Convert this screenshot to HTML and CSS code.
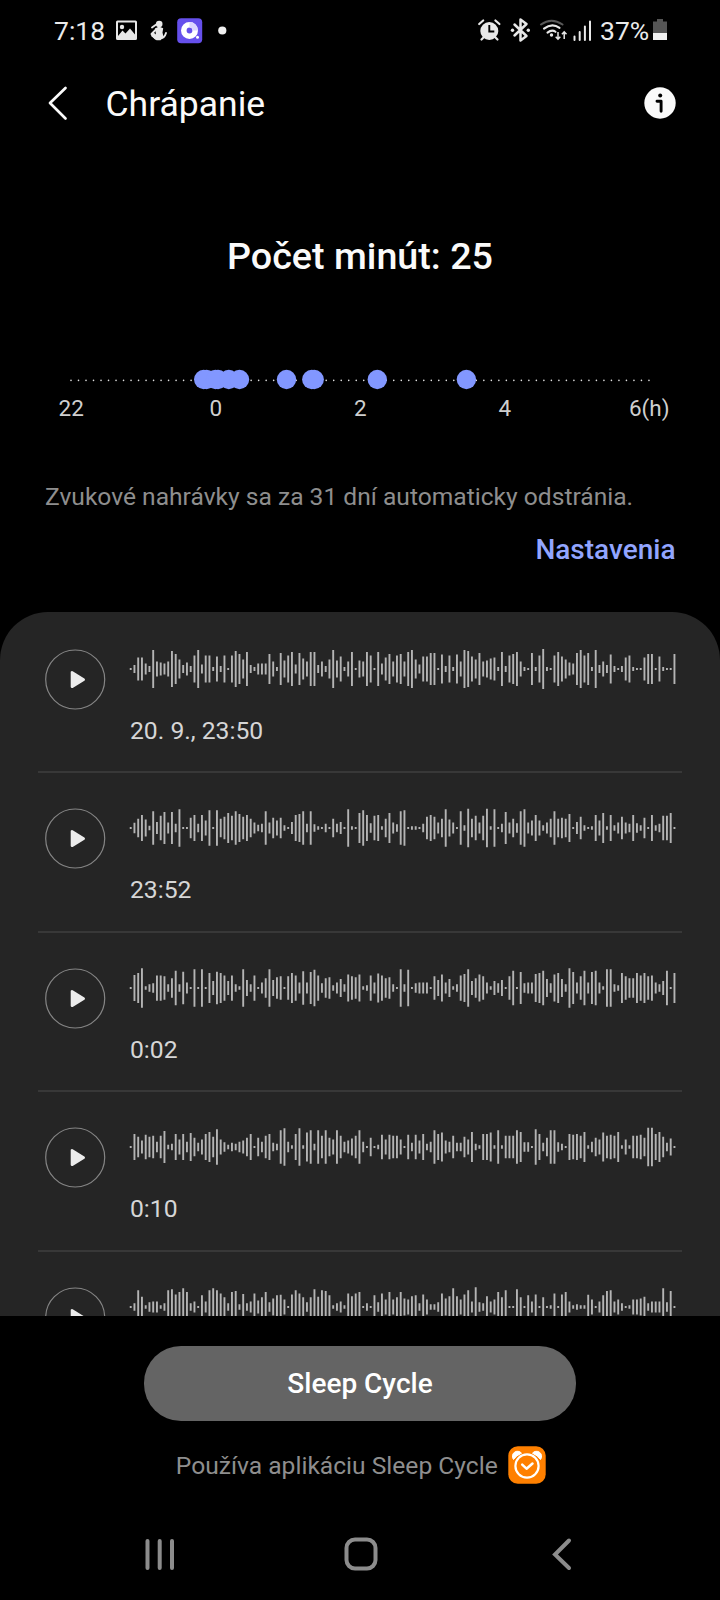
FILE: index.html
```html
<!DOCTYPE html>
<html lang="sk">
<head>
<meta charset="utf-8">
<title>Chrápanie</title>
<link rel="stylesheet" href="styles.css">
</head>
<body>
<div class="screen">
  <div class="status">
    <span class="clock">7:18</span>
    <svg class="status-left" width="120" height="30" viewBox="112 16 120 30">
      <path fill="#e8e8e8" fill-rule="evenodd" d="M117.500 20.500h18q1.500 0 1.500 1.500v16.500q0 1.500-1.500 1.500h-18q-1.500 0-1.500-1.500V22q0-1.500 1.500-1.500zM118 22.500V36l4.500-5.500 3 3 4.500-5 5 6V22.500z"/>
      <circle cx="122" cy="27" r="2.200" fill="#e8e8e8"/>
      <g fill="#e8e8e8"><circle cx="159.200" cy="24" r="3.300"/><path d="M155 28.500l4-2 4.200 1.800-.7 4.200 1 4.500-3 3.200h-4l-5.500-4.200 2.500-3.500 2.500 2z"/></g>
      <path d="M152 27.500l5-3.500M156.500 29l-5 5 4 4.500h4q5 0 6.500-5.500" fill="none" stroke="#e8e8e8" stroke-width="1.900" stroke-linecap="round" stroke-linejoin="round"/>
      <rect x="177.200" y="18.200" width="25" height="25" rx="4" fill="#6650ec"/>
      <circle cx="189.500" cy="30.500" r="5.700" fill="none" stroke="#fff" stroke-width="5.600"/>
      <path d="M189.500 22a8.500 8.500 0 0 1 8.500 8.500h-5.500a3 3 0 0 0-3-3z" fill="#dcd6ff"/>
      <circle cx="197.500" cy="37.300" r="1.500" fill="#fff"/>
      <circle cx="222.300" cy="30.500" r="4.100" fill="#f0f0f0"/>
    </svg>
    <svg class="status-right" width="118" height="30" viewBox="476 16 118 30">
      <circle cx="488.300" cy="31" r="9" fill="#e8e8e8"/>
      <path d="M488.300 25v6.500h5" fill="none" stroke="#000" stroke-width="1.900"/>
      <path d="M478.200 24l4-3.500M498.400 24l-4-3.500M482.500 37.500l-2 2M494.500 37.500l2 2" stroke="#e8e8e8" stroke-width="2.200" stroke-linecap="round"/>
      <path d="M513.500 24.500l12 11.500-6 4.500v-21l6 4.500-12 11.500" fill="none" stroke="#e8e8e8" stroke-width="2.500" stroke-linejoin="round" stroke-linecap="round"/>
      <circle cx="511.500" cy="30.200" r="1.700" fill="#e8e8e8"/><circle cx="527.300" cy="30.200" r="1.700" fill="#e8e8e8"/>
      <path d="M540 24.500q10.500-7.500 21.500 0" fill="none" stroke="#595959" stroke-width="2.100" stroke-linecap="round"/>
      <path d="M543 28.700q8-6.200 15.500-.8M546.500 32.600q4.500-3.600 8-.8" fill="none" stroke="#e8e8e8" stroke-width="2.100" stroke-linecap="round"/>
      <circle cx="550.500" cy="35" r="1.700" fill="#e8e8e8"/>
      <path d="M557 32v7M554.700 36.700l2.300 2.500 2.300-2.500M563.200 39v-7M560.900 34.300l2.300-2.500 2.300 2.500" fill="none" stroke="#e8e8e8" stroke-width="1.500"/>
      <path d="M573.500 36.500v3.500M578.700 32v8M583.900 26.500V40M589 21.500V40" stroke="#e8e8e8" stroke-width="2" stroke-linecap="round"/>
    </svg>
    <span class="percent">37%</span>
    <svg class="battery" width="14" height="22" viewBox="0 0 14 22"><path d="M4 0h6v2.500h4V14H0V2.500h4z" fill="#555"/><path d="M0 14h14v7H0z" fill="#f0f0f0"/></svg>
  </div>

  <header class="appbar">
    <svg class="back" width="20" height="36" viewBox="0 0 20 36"><path d="M17.500 3L2 18l15.500 15.500" fill="none" stroke="#fafafa" stroke-width="2.700" stroke-linecap="round" stroke-linejoin="round"/></svg>
    <h1 class="title">Chrápanie</h1>
    <svg class="info" width="32" height="32" viewBox="0 0 32 32"><circle cx="16" cy="16" r="15.700" fill="#fafafa"/><circle cx="16.200" cy="8.500" r="2" fill="#000"/><path d="M13 14.200h4.100v10" fill="none" stroke="#000" stroke-width="2.900" stroke-linecap="round" stroke-linejoin="round"/></svg>
  </header>

  <h2 class="summary">Počet minút: 25</h2>

  <svg class="timeline" width="720" height="22" viewBox="0 369 720 22">
    <path d="M71 380.400H650" stroke="#e0e0e0" stroke-width="1.600" stroke-linecap="round" stroke-dasharray="0 7.506"/>
    <g fill="#8297ff"><circle cx="203.700" cy="379.500" r="9.700"/><circle cx="206.500" cy="379.500" r="9.700"/><circle cx="215.500" cy="379.500" r="9.700"/><circle cx="218" cy="379.500" r="9.700"/><circle cx="228.800" cy="379.500" r="9.700"/><circle cx="239.500" cy="379.500" r="9.700"/><circle cx="286.500" cy="379.500" r="9.700"/><circle cx="311.800" cy="379.500" r="9.700"/><circle cx="314.200" cy="379.500" r="9.700"/><circle cx="377.300" cy="379.500" r="9.700"/><circle cx="466.400" cy="379.500" r="9.700"/></g>
  </svg>
  <div class="hours"><span>22</span><span>0</span><span>2</span><span>4</span><span>6(h)</span></div>

  <p class="note">Zvukové nahrávky sa za 31 dní automaticky odstránia.</p>
  <a class="settings">Nastavenia</a>

  <main class="recordings" id="recordings"></main>

  <footer class="footer">
    <button class="launch">Sleep Cycle</button>
    <div class="credit">
      <span>Používa aplikáciu Sleep Cycle</span>
      <svg width="38" height="38" viewBox="0 0 38 38"><rect x=".3" y=".3" width="37.400" height="37.400" rx="9.500" fill="#ff8000"/><path d="M5.500 13.500a5 5 0 0 1 8-6.300q-5 2-8 6.300zM32.500 13.500a5 5 0 0 0-8-6.300q5 2 8 6.300z" fill="#fff" stroke="#fff" stroke-linejoin="round"/><circle cx="19" cy="20" r="11.600" fill="none" stroke="#fff" stroke-width="2.200"/><path d="M14.200 18.700l4.300 4 6-5.200" fill="none" stroke="#fff" stroke-width="2.500" stroke-linecap="round" stroke-linejoin="round"/></svg>
    </div>
  </footer>

  <nav class="nav">
    <svg width="32" height="34" viewBox="0 0 32 34"><path d="M3.500 4v27M15.700 4v27M28 4v27" stroke="#8c8c8c" stroke-width="4" stroke-linecap="round"/></svg>
    <svg class="home" width="34" height="34" viewBox="0 0 34 34"><rect x="2.500" y="2.500" width="29" height="29" rx="8.500" fill="none" stroke="#8c8c8c" stroke-width="4"/></svg>
    <svg width="20" height="34" viewBox="0 0 20 34"><path d="M17 3.500L3 17.500 17 31" fill="none" stroke="#8c8c8c" stroke-width="4" stroke-linecap="round"/></svg>
  </nav>
</div>
<script src="recordings.js"></script>
</body>
</html>
```
FILE: styles.css
```css
* { box-sizing: border-box; }
body { margin: 0; background: #000; }
svg { display: block; flex: none; }

.screen {
  width: 720px;
  height: 1600px;
  display: flex;
  flex-direction: column;
  overflow: hidden;
  background: #000;
  color: #fafafa;
  font-family: Roboto, "Noto Sans", sans-serif;
}
.screen > * { flex: none; }

.status {
  height: 60px;
  display: flex;
  align-items: center;
  padding: 2px 53px 0 54px;
  font-size: 26.500px;
  color: #ebebeb;
}
.clock { width: 58px; margin-top: -1px; white-space: nowrap; }
.status-left { margin-right: auto; }
.percent { width: 49px; margin: -1px 0 0 5px; white-space: nowrap; }
.battery { margin: -2px 0 0 4px; }

.appbar {
  height: 87px;
  display: flex;
  align-items: center;
  padding: 0 44px 0 48px;
}
.back, .info { margin-top: -2px; }
.title {
  margin: 1px auto 0 37.500px;
  font-size: 35.500px;
  font-weight: 400;
}

.summary {
  margin: 83.500px 0 0;
  font-size: 37.700px;
  font-weight: 500;
  line-height: 50px;
  text-align: center;
}

.timeline { margin-top: 88.500px; }
.hours {
  display: grid;
  grid-template-columns: repeat(5, 144.500px);
  margin: 2px 0 0 -1px;
  font-size: 22.500px;
  line-height: 30px;
  text-align: center;
  color: #cfcfcf;
}

.note {
  margin: 59px 0 0 45px;
  font-size: 24.600px;
  line-height: 30px;
  color: #8e8e8e;
  white-space: nowrap;
}
.settings {
  margin: 21px 44.500px 0 0;
  font-size: 28px;
  font-weight: 500;
  line-height: 34px;
  text-align: right;
  color: #92a5ff;
}

.recordings {
  height: 704px;
  margin-top: 45px;
  padding: 2px 38px 0;
  border-radius: 48px 48px 0 0;
  overflow: hidden;
  background: #252525;
}
.recording {
  height: 159.400px;
  display: flex;
  gap: 24px;
  padding: 35px 7px 0;
  border-bottom: 2px solid #383838;
}
.details { display: flex; flex-direction: column; }
.wave { margin: -2px 0 0 -1px; }
.time {
  margin-top: 25px;
  font-size: 24.700px;
  line-height: 30px;
  color: #d6d6d6;
}

.footer {
  height: 190px;
  display: flex;
  flex-direction: column;
  align-items: center;
  padding-top: 30px;
}
.launch {
  width: 432px;
  height: 75px;
  padding: 0;
  border: 0;
  border-radius: 37px;
  background: #646464;
  color: #fff;
  font: 500 28px Roboto, "Noto Sans", sans-serif;
}
.credit {
  display: flex;
  align-items: center;
  gap: 10px;
  margin: 25px 0 0 1.500px;
  font-size: 24.600px;
  color: #8e8e8e;
}

.nav {
  height: 93px;
  display: flex;
  justify-content: space-between;
  align-items: center;
  padding: 2px 148px 0 144px;
}
.home { margin-right: 7px; }
```
FILE: recordings.js
```js
// Bar heights of each recording's waveform, with the gain applied to them.
const recordings = [
  { time: '20. 9., 23:50', gain: 1, bars: [2,8,23,23,11,6,38,15,13,11,15,36,30,19,8,13,6,27,38,9,27,27,4,25,6,27,2,27,36,30,19,34,8,4,11,11,11,30,15,4,32,17,27,34,9,32,21,15,34,34,8,15,6,19,38,17,25,4,15,34,2,17,15,34,27,2,34,11,23,30,15,27,30,15,34,38,19,9,25,25,32,32,2,29,6,27,4,29,15,38,36,25,19,32,15,17,21,23,4,34,6,27,30,34,15,4,2,32,4,27,40,4,2,27,34,25,19,13,11,32,38,27,32,4,38,8,15,8,29,6,2,6,23,27,4,2,2,23,30,30,2,25,4,2,2,30] },
  { time: '23:52', gain: 0.935, bars: [2,11,20,28,18,5,36,13,26,34,12,34,9,40,2,2,22,28,9,28,16,38,2,38,20,24,32,26,36,30,24,28,20,12,7,9,36,12,22,16,22,6,2,13,28,30,36,9,36,8,4,2,9,2,20,9,13,2,40,4,2,32,38,28,10,26,28,4,20,32,12,8,36,38,2,4,4,2,9,24,28,24,12,20,40,18,12,2,36,6,41,20,26,12,26,41,4,40,2,9,34,12,20,10,36,40,12,16,28,16,6,12,20,36,20,22,20,30,2,13,24,6,2,4,28,16,32,4,28,6,12,24,12,9,28,10,6,22,2,28,6,9,26,26,32,2] },
  { time: '0:02', gain: 0.935, bars: [2,28,32,42,4,8,10,27,27,25,8,21,37,8,35,12,2,40,2,40,2,32,15,35,32,27,15,27,8,4,40,17,8,27,2,12,21,40,17,23,25,2,25,32,27,12,36,12,34,39,27,10,21,23,6,12,19,8,29,25,23,29,4,6,27,12,31,27,21,23,8,2,40,8,39,2,10,12,12,12,2,25,17,29,12,19,4,8,27,30,40,15,21,29,25,12,4,15,10,17,2,25,37,2,34,10,12,12,30,32,37,19,10,29,32,19,8,42,34,12,25,37,12,34,37,12,4,40,40,8,6,32,25,21,21,32,27,32,25,27,12,8,15,37,2,32] },
  { time: '0:10', gain: 0.935, bars: [2,28,22,14,26,22,24,11,24,34,5,7,28,16,28,11,30,20,9,16,28,32,22,38,16,10,5,9,7,11,14,20,28,2,20,11,24,28,9,7,36,40,11,4,28,40,4,31,36,7,36,24,36,20,16,36,24,11,14,18,24,36,11,2,20,2,5,26,16,26,24,24,16,2,26,9,26,14,28,7,11,36,28,31,14,11,24,9,9,22,16,32,7,4,28,28,31,4,36,4,24,24,24,36,32,10,10,2,38,28,9,20,36,36,10,7,2,28,26,28,24,32,4,11,20,16,31,24,26,24,32,4,16,4,24,24,26,20,41,41,28,32,22,9,18,2] },
  { gain: 0.935, bars: [2,8,36,22,4,10,12,12,4,8,36,38,27,32,40,32,8,12,2,25,12,36,40,36,29,21,8,32,34,6,28,8,12,29,14,21,32,10,18,25,26,16,2,27,36,29,21,10,21,38,22,36,34,25,4,8,12,4,29,23,29,32,2,8,2,25,10,29,16,32,16,21,32,18,16,23,25,8,27,16,6,6,10,29,18,23,40,23,16,27,36,12,42,10,8,23,12,16,32,21,36,2,2,38,21,2,25,12,27,2,21,2,4,29,2,27,32,12,4,6,4,4,26,16,2,12,25,34,36,12,16,8,2,4,16,16,18,22,8,12,12,12,40,10,34,2] }
];

const PITCH = 3.75;
const MID = 22;

function wave({ bars, gain }) {
  const d = bars.map((h, i) => {
    const size = Math.max(1.8, h * gain);
    return `M${(1.7 + i * PITCH).toFixed(2)} ${(MID - size / 2).toFixed(2)}v${size.toFixed(2)}`;
  }).join('');
  return `<svg class="wave" width="548" height="44" viewBox="0 0 548 44"><path d="${d}" stroke="#b4b4b4" stroke-width="1.9"/></svg>`;
}

document.getElementById('recordings').innerHTML = recordings.map(r => `
  <section class="recording">
    <svg width="61" height="61" viewBox="0 0 61 61">
      <circle cx="30.2" cy="30.5" r="29.5" fill="none" stroke="#858585" stroke-width="1.2"/>
      <path d="M27 23.300v14.500l11.700-7.200z" fill="#ececec" stroke="#ececec" stroke-width="2.600" stroke-linejoin="round"/>
    </svg>
    <div class="details">${wave(r)}${r.time ? `<span class="time">${r.time}</span>` : ''}</div>
  </section>`).join('');
```
